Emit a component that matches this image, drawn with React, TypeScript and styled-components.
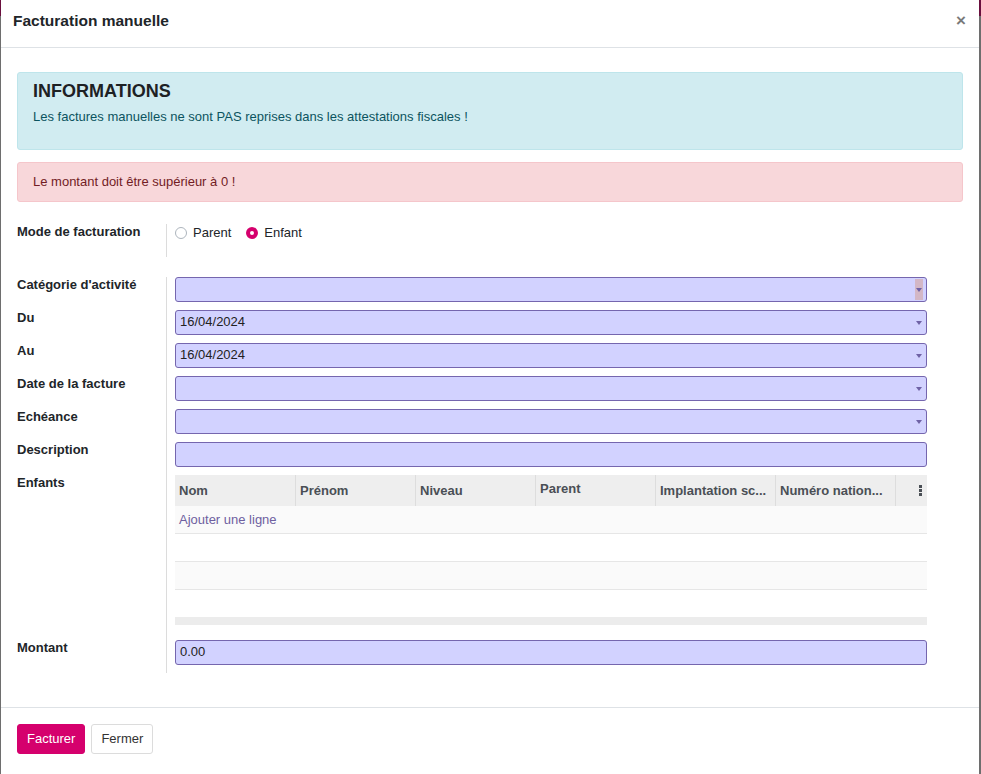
import styled, { createGlobalStyle } from 'styled-components';

const GlobalStyle = createGlobalStyle`
  html, body {
    margin: 0;
    padding: 0;
    overflow: hidden;
  }
  body {
    font-family: "Liberation Sans", Arial, sans-serif;
    font-size: 13px;
    color: #212529;
  }
`;

const Backdrop = styled.div`
  height: 774px;
  background: linear-gradient(to bottom, #6a0f3e 0, #6a0f3e 16px, #6e6e6e 16px);
  padding: 0 2px 0 1px;
  box-sizing: border-box;
`;

const Modal = styled.div`
  height: 774px;
  background: #fff;
  display: flex;
  flex-direction: column;
`;

const Header = styled.header`
  display: flex;
  align-items: center;
  justify-content: space-between;
  height: 48px;
  box-sizing: border-box;
  padding: 0 13px 5px 12px;
  border-bottom: 1px solid #dee2e6;
`;

const Title = styled.h4`
  margin: 0;
  font-size: 15.5px;
  line-height: 24px;
  font-weight: bold;
  color: #212529;
`;

const Close = styled.span`
  font-size: 17px;
  font-weight: bold;
  color: #7a7a7a;
  line-height: 24px;
`;

const Body = styled.div`
  flex: 1;
  padding: 24px 16px 0 16px;
`;

const Alert = styled.div<{ $tone: 'info' | 'danger' }>`
  border: 1px solid ${(p) => (p.$tone === 'info' ? '#bee5eb' : '#f5c6cb')};
  background: ${(p) => (p.$tone === 'info' ? '#d1ecf1' : '#f8d7da')};
  color: ${(p) => (p.$tone === 'info' ? '#0c5460' : '#721c24')};
  border-radius: 3px;
  padding: ${(p) => (p.$tone === 'info' ? '7px 15px 10px' : '10px 15px')};
  margin-bottom: 12px;
  line-height: 18px;
`;

const AlertHeading = styled.h4`
  margin: 0 0 5px;
  font-size: 18px;
  line-height: 22px;
  font-weight: bold;
  color: #1d2124;
`;

const AlertText = styled.p`
  margin: 0 0 12px;
  line-height: 20px;
`;

const Form = styled.div`
  padding: 10px 36px 0 0;
`;

const Group = styled.div<{ $gap?: number }>`
  display: grid;
  grid-template-columns: 150px 1fr;
  margin-bottom: ${(p) => p.$gap ?? 0}px;
`;

const Label = styled.label`
  font-weight: bold;
  line-height: 15px;
  border-right: 1px solid #dcdcdc;
  padding-bottom: 8px;
  white-space: nowrap;
`;

const Cell = styled.div<{ $minHeight?: number }>`
  padding: 0 0 8px 8px;
  min-height: ${(p) => p.$minHeight ?? 0}px;
  box-sizing: border-box;
`;

const Radios = styled.div`
  display: flex;
  align-items: center;
  gap: 15px;
  height: 17px;
`;

const RadioOption = styled.span`
  display: flex;
  align-items: center;
  gap: 6px;
`;

const RadioDot = styled.span<{ $checked?: boolean }>`
  width: 12px;
  height: 12px;
  box-sizing: border-box;
  border-radius: 50%;
  border: ${(p) => (p.$checked ? '4px solid #d5006d' : '1px solid #adb5bd')};
  background: #fff;
`;

const Field = styled.div`
  position: relative;
  height: 25px;
  box-sizing: border-box;
  border: 1px solid #7566ae;
  border-radius: 3px;
  background: #d2d2ff;
  padding: 0 4px 1px;
  line-height: 22px;
  color: #222;
`;

const Caret = styled.span<{ $shaded?: boolean }>`
  position: absolute;
  right: 3px;
  top: 1px;
  bottom: 1px;
  width: 8px;
  display: flex;
  align-items: center;
  justify-content: center;
  background: ${(p) => (p.$shaded ? '#d3b7c6' : 'transparent')};
  &::after {
    content: '';
    border-left: 3.5px solid transparent;
    border-right: 3.5px solid transparent;
    border-top: 4px solid #6f62a6;
  }
`;

const Table = styled.div`
  margin-bottom: 7px;
`;

const HeadRow = styled.div`
  display: grid;
  grid-template-columns: repeat(6, 120px) 1fr;
  height: 31px;
  background: #eeeeee;
`;

const HeadCell = styled.div<{ $raised?: boolean }>`
  padding: 0 4px ${(p) => (p.$raised ? 4 : 0)}px;
  display: flex;
  align-items: center;
  font-weight: bold;
  color: #4a4f55;
  white-space: nowrap;
  overflow: hidden;
  & + & {
    border-left: 1px solid #dddddd;
  }
`;

const KebabCell = styled(HeadCell)`
  justify-content: flex-end;
  padding-right: 5px;
`;

const BodyRow = styled.div<{ $striped?: boolean }>`
  height: 27px;
  border-bottom: 1px solid #e6e6e6;
  background: ${(p) => (p.$striped ? '#fafafa' : '#fff')};
  padding: 0 4px;
  display: flex;
  align-items: center;
  &:nth-last-child(2) {
    border-bottom: none;
  }
`;

const AddLine = styled.a`
  color: #6e5fa0;
  text-decoration: none;
`;

const ScrollBar = styled.div`
  height: 8px;
  background: #ececec;
`;

const Footer = styled.footer`
  border-top: 1px solid #dee2e6;
  padding: 16px 16px 20px;
  display: flex;
  gap: 6px;
`;

const Button = styled.button<{ $primary?: boolean }>`
  font-family: inherit;
  font-size: 13px;
  height: 30px;
  padding: 0 9px 1px;
  border-radius: 3px;
  border: 1px solid ${(p) => (p.$primary ? '#d5006d' : '#dcdcdc')};
  background: ${(p) => (p.$primary ? '#d5006d' : '#fff')};
  color: ${(p) => (p.$primary ? '#fff' : '#333')};
`;

const columns = ['Nom', 'Prénom', 'Niveau', 'Parent', 'Implantation sc...', 'Numéro nation...'];

const fields = [
  { label: "Catégorie d'activité", value: '', shaded: true, select: true },
  { label: 'Du', value: '16/04/2024', select: true },
  { label: 'Au', value: '16/04/2024', select: true },
  { label: 'Date de la facture', value: '', select: true },
  { label: 'Echéance', value: '', select: true },
  { label: 'Description', value: '' },
];

export default function App() {
  return (
    <>
      <GlobalStyle />
      <Backdrop>
        <Modal>
          <Header>
            <Title>Facturation manuelle</Title>
            <Close>×</Close>
          </Header>
          <Body>
            <Alert $tone="info">
              <AlertHeading>INFORMATIONS</AlertHeading>
              <AlertText>Les factures manuelles ne sont PAS reprises dans les attestations fiscales !</AlertText>
            </Alert>
            <Alert $tone="danger">Le montant doit être supérieur à 0 !</Alert>
            <Form>
              <Group $gap={20}>
                <Label>Mode de facturation</Label>
                <Cell $minHeight={33}>
                  <Radios>
                    <RadioOption>
                      <RadioDot />
                      Parent
                    </RadioOption>
                    <RadioOption>
                      <RadioDot $checked />
                      Enfant
                    </RadioOption>
                  </Radios>
                </Cell>
              </Group>
              <Group>
                {fields.map((f) => (
                  <>
                    <Label key={f.label}>{f.label}</Label>
                    <Cell key={f.label + '-v'}>
                      <Field>
                        {f.value}
                        {f.select && <Caret $shaded={f.shaded} />}
                      </Field>
                    </Cell>
                  </>
                ))}
                <Label>Enfants</Label>
                <Cell>
                  <Table>
                    <HeadRow>
                      {columns.map((c) => (
                        <HeadCell key={c} $raised={c === 'Parent'}>
                          {c}
                        </HeadCell>
                      ))}
                      <KebabCell>
                        <svg width="3" height="11" viewBox="0 0 3 11">
                          <rect x="0" y="0" width="3" height="3" fill="#4a4f55" />
                          <rect x="0" y="4" width="3" height="3" fill="#4a4f55" />
                          <rect x="0" y="8" width="3" height="3" fill="#4a4f55" />
                        </svg>
                      </KebabCell>
                    </HeadRow>
                    <BodyRow $striped>
                      <AddLine>Ajouter une ligne</AddLine>
                    </BodyRow>
                    <BodyRow />
                    <BodyRow $striped />
                    <BodyRow />
                    <ScrollBar />
                  </Table>
                </Cell>
                <Label>Montant</Label>
                <Cell>
                  <Field>0.00</Field>
                </Cell>
              </Group>
            </Form>
          </Body>
          <Footer>
            <Button $primary>Facturer</Button>
            <Button>Fermer</Button>
          </Footer>
        </Modal>
      </Backdrop>
    </>
  );
}
